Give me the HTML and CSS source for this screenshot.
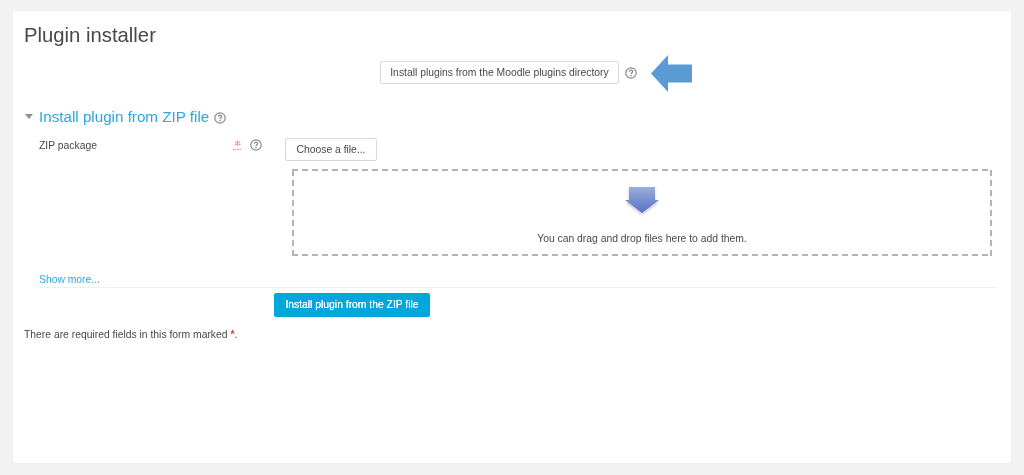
FILE: index.html
```html
<!DOCTYPE html>
<html lang="en">
<head>
<meta charset="utf-8">
<title>Plugin installer</title>
<link rel="stylesheet" href="styles.css">
</head>
<body>
<main class="card">
  <h2 class="page-title">Plugin installer</h2>
  <div class="directory-row">
    <button class="btn btn-directory" type="button">Install plugins from the Moodle plugins directory</button>
    <svg class="help help-directory" viewBox="0 0 12 12"><use href="#help"/></svg>
    <svg class="arrow-left" viewBox="0 0 41 37"><path d="M0 18.500 17 0v9.500h24v18H17V37z"/></svg>
  </div>
  <h3 class="section-title">
    <svg class="caret" viewBox="0 0 8 5"><path d="M0 0h8L4 5z"/></svg>
    <a class="section-link">Install plugin from ZIP file</a>
    <svg class="help help-section" viewBox="0 0 12 12"><use href="#help"/></svg>
  </h3>
  <div class="form-row">
    <div class="form-label">
      <span class="label-text">ZIP package</span>
      <span class="label-icons">
        <svg class="required-icon" viewBox="0 0 10 10">
          <path class="star" d="M5 .5v5M2.500 1.500l5 3M7.500 1.500l-5 3"/>
          <path class="dots" d="M1 8.500h8"/>
        </svg>
        <svg class="help" viewBox="0 0 12 12"><use href="#help"/></svg>
      </span>
    </div>
    <div class="form-field">
      <button class="btn btn-file" type="button">Choose a file...</button>
      <div class="dropzone">
        <svg class="arrow-down" viewBox="0 0 36 32">
          <defs>
            <linearGradient id="drop" x1="0" y1="0" x2="0" y2="1">
              <stop offset="0" stop-color="#9badd9"/>
              <stop offset="1" stop-color="#5573c8"/>
            </linearGradient>
            <filter id="soft" x="-20%" y="-20%" width="140%" height="150%">
              <feDropShadow dx="0" dy="2" stdDeviation="1.500" flood-color="#000" flood-opacity=".22"/>
            </filter>
          </defs>
          <path fill="url(#drop)" filter="url(#soft)" d="M5 1h26v13h4L18 27 1 14h4z"/>
        </svg>
        <p class="dropzone-text">You can drag and drop files here to add them.</p>
      </div>
    </div>
  </div>
  <a class="show-more">Show more...</a>
  <div class="submit-row">
    <button class="btn btn-primary" type="button">Install plugin from the ZIP file</button>
  </div>
  <p class="required-note">There are required fields in this form marked <span class="red-star">*</span>.</p>
</main>
<svg class="sprite" aria-hidden="true">
  <symbol id="help" viewBox="0 0 12 12">
    <circle cx="6" cy="6" r="5.200" fill="none" stroke="#8a8a8a" stroke-width="1.200"/>
    <path d="M4.300 4.700C4.400 3.700 5.100 3.200 6 3.200c1 0 1.700.6 1.700 1.400 0 1.300-1.700 1.200-1.700 2.600" fill="none" stroke="#8a8a8a" stroke-width="1.200"/>
    <path d="M5.300 8h1.400v1.300H5.300z" fill="#8a8a8a"/>
  </symbol>
</svg>
</body>
</html>
```
FILE: styles.css
```css
* { box-sizing: border-box; }
html, body { height: 100%; }
body {
  margin: 0;
  padding: 10px 12px 11px;
  background: #f2f2f2;
  color: #484848;
  font-family: "Liberation Sans", Arial, sans-serif;
  font-size: 10.350px;
  overflow: hidden;
}
.sprite { display: none; }
.card {
  height: 454px;
  padding: 12px 14px 0 11px;
  background: #fff;
  border: 1px solid #efefef;
  filter: blur(.3px);
}
.page-title {
  margin: 0;
  height: 25px;
  font-size: 20.300px;
  line-height: 25px;
  font-weight: 400;
}
.directory-row {
  display: flex;
  align-items: center;
  height: 23px;
  margin-top: 13px;
  padding-left: 356px;
  position: relative;
}
.btn {
  display: block;
  background: #fff;
  border: 1px solid #d8d8d8;
  border-radius: 2px;
  color: #484848;
  font-family: inherit;
  font-size: 10.350px;
  line-height: 14px;
  padding: 0;
}
.btn-directory { width: 239px; height: 23px; }
.help { display: block; width: 12px; height: 12px; flex: none; }
.help-directory { margin: 1px 0 0 6px; }
.arrow-left {
  position: absolute;
  left: 627px;
  top: -6px;
  width: 41px;
  height: 37px;
  fill: #5b9bd5;
}
.section-title {
  display: flex;
  align-items: center;
  height: 22px;
  margin: 21px 0 0;
  font-size: 15.200px;
  font-weight: 400;
}
.caret { width: 8px; height: 5px; margin-left: 1px; fill: #909090; }
.section-link { margin-left: 6px; color: #2aa8e0; }
.help-section { margin: 3px 0 0 5px; }
.form-row {
  display: flex;
  margin-top: 11px;
  padding-left: 15px;
}
.form-label {
  display: flex;
  justify-content: space-between;
  width: 223px;
  height: 14px;
  line-height: 14px;
}
.label-text { padding-top: 1px; }
.label-icons { display: flex; align-items: center; gap: 7px; }
.required-icon { width: 11px; height: 11px; }
.star { fill: none; stroke: #f29a9a; stroke-width: 1.100; }
.dots { fill: none; stroke: #e77; stroke-width: 1; stroke-dasharray: 1 1; }
.form-field { margin-left: 23px; flex: 1; min-width: 0; }
.btn-file { width: 92px; height: 23px; }
.dropzone {
  width: 700px;
  height: 87px;
  margin: 8px 0 0 7px;
  display: flex;
  flex-direction: column;
  align-items: center;
  background-image:
    repeating-linear-gradient(90deg, #b4b4b4 0 6px, transparent 6px 10px),
    repeating-linear-gradient(90deg, #b4b4b4 0 6px, transparent 6px 10px),
    repeating-linear-gradient(0deg, #b4b4b4 0 6px, transparent 6px 10px),
    repeating-linear-gradient(0deg, #b4b4b4 0 6px, transparent 6px 10px);
  background-size: 100% 2px, 100% 2px, 2px 100%, 2px 100%;
  background-position: 0 0, 0 100%, 0 0, 100% 0;
  background-repeat: no-repeat;
}
.arrow-down { display: block; width: 36px; height: 32px; margin-top: 17px; }
.dropzone-text { margin: 14px 0 0; line-height: 14px; }
.show-more {
  display: block;
  margin: 17px 0 0 15px;
  height: 15px;
  line-height: 14px;
  color: #2aa8e0;
  border-bottom: 1px solid #f0f0f0;
}
.submit-row { padding-left: 250px; margin-top: 5px; }
.btn-primary {
  width: 156px;
  height: 24px;
  background: #00a7dd;
  border-color: #00a7dd;
  color: #fff;
  text-shadow: 0 0 .6px #fff;
}
.required-note { margin: 10px 0 0; line-height: 16px; }
.red-star { color: #e33; font-weight: 700; }
```
